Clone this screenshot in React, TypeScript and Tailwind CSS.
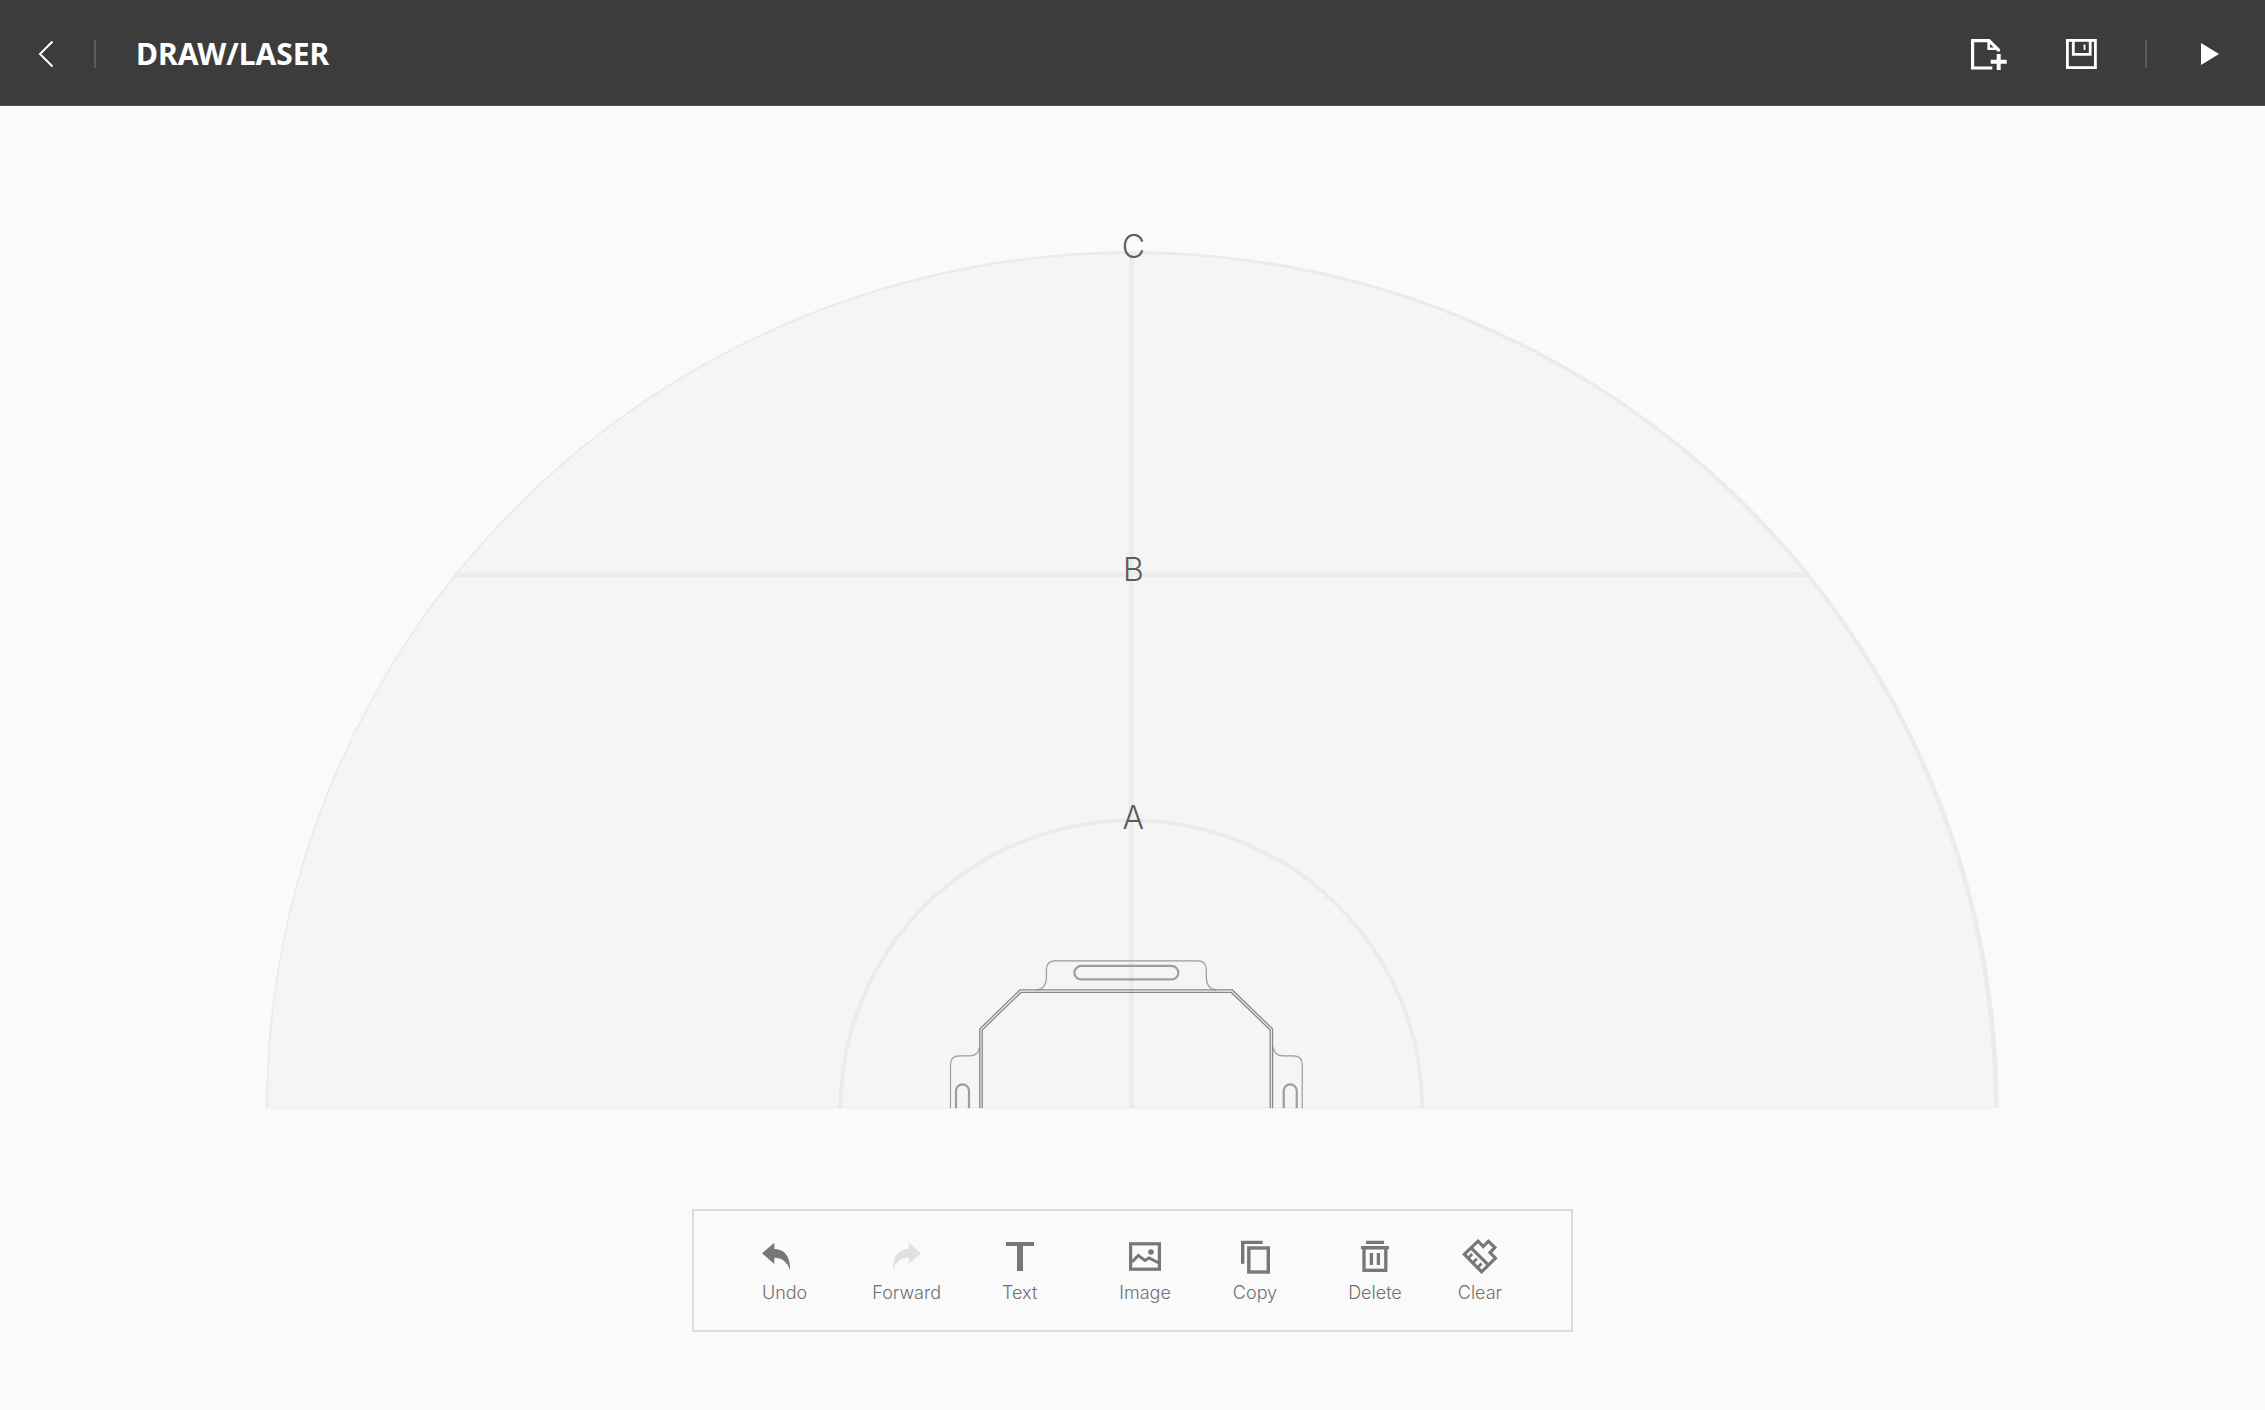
import React from "react";

type Tool = {
  label: string;
  spacing: string;
  align?: string;
  disabled?: boolean;
  icon: React.ReactNode;
};

function Icon({ width, height = 36, children }: { width: number; height?: number; children: React.ReactNode }) {
  return (
    <svg width={width} height={height} viewBox={`0 0 ${width} ${height}`} fill="none" stroke="currentColor" aria-hidden="true">
      {children}
    </svg>
  );
}

const TOOLS: Tool[] = [
  {
    label: "Undo",
    spacing: "",
    align: "items-start",
    icon: (
      <Icon width={28}>
        <path d="M0 15.3 12.3 4.7V11C22 11 28.5 18 28 32 25.5 24 20 19.7 12.3 19.7V26Z" fill="currentColor" stroke="none" />
      </Icon>
    ),
  },
  {
    label: "Forward",
    spacing: "ml-[65px]",
    disabled: true,
    icon: (
      <Icon width={28}>
        <path d="M28 15.3 15.7 4.7V11C6 11-.5 18 0 32 2.5 24 8 19.7 15.7 19.7V26Z" fill="currentColor" stroke="none" />
      </Icon>
    ),
  },
  {
    label: "Text",
    spacing: "ml-[61px]",
    icon: (
      <Icon width={28}>
        <path d="M0 6H28" strokeWidth="4" />
        <path d="M14 6V33" strokeWidth="6" />
      </Icon>
    ),
  },
  {
    label: "Image",
    spacing: "ml-[82px]",
    icon: (
      <Icon width={32}>
        <rect x="1.6" y="5.8" width="28.8" height="25.4" strokeWidth="3.2" />
        <path d="M3 24 9.3 17.5 16 22.5 20 20 30 25" strokeWidth="3" />
        <circle cx="22" cy="14" r="2.8" fill="currentColor" stroke="none" />
      </Icon>
    ),
  },
  {
    label: "Copy",
    spacing: "ml-[62px]",
    icon: (
      <Icon width={29}>
        <path d="M1.7 25.7V4.4H21.7" strokeWidth="3.4" />
        <rect x="7.8" y="10" width="19.5" height="24" strokeWidth="3.4" />
      </Icon>
    ),
  },
  {
    label: "Delete",
    spacing: "ml-[71px]",
    icon: (
      <Icon width={28}>
        <path d="M5 4.4H23M0 9.7H28M10.4 15V27M17.4 15V27" strokeWidth="3.3" />
        <rect x="3" y="9.7" width="21.8" height="22.6" strokeWidth="3.3" />
      </Icon>
    ),
  },
  {
    label: "Clear",
    spacing: "ml-14",
    icon: (
      <Icon width={36}>
        <path d="M16 3.2 21.3 8.5 26.4 3.2 32.8 9.6 28 14.6 33.4 20.2 19.6 33.8 2.3 16.3Z" strokeWidth="3.2" />
        <path d="M9 9.8 26.5 27.2" strokeWidth="3.2" />
        <path d="M6 20.3 10.2 16.1M10.7 25 14.9 20.8M15.4 29.7 19.6 25.5" strokeWidth="2.8" />
      </Icon>
    ),
  },
];

function WorkArea() {
  return (
    <svg
      viewBox="0 0 1734 858"
      className="w-[76.5%] overflow-visible"
      fill="none"
      role="img"
      aria-label="Working range with zones A, B and C"
    >
      <path d="M0 858A867 858 0 0 1 1734 858Z" fill="#ebebeb" />
      <path d="M2 857A863.5 854 0 0 1 1729 857Z" fill="#f5f5f5" />
      <path d="M189 324H1544M866 1V858" stroke="#ebebeb" strokeWidth="4.6" />
      <path d="M575 858A291 288 0 0 1 1157 858" stroke="#ebebeb" strokeWidth="4" />

      <g stroke="#9c9c9c" strokeWidth="1.2">
        <path d="M771 740Q781 738 781 727V719Q781 710.5 790 710.5H932Q941 710.5 941 719V727Q941 738 951 740" />
        <path d="M685 858V814Q685 805.5 694 805.5H704Q713 805.5 714 797" />
        <path d="M1037 858V814Q1037 805.5 1028 805.5H1018Q1009 805.5 1008 797" />
      </g>
      <g stroke="#868686" strokeWidth="1.3">
        <path d="M714.3 858V778.5L754.5 739.5H967L1007.3 778.5V858" />
        <path d="M716.7 858V779.5L755.5 742H966L1005 779.5V858" />
      </g>
      <g stroke="#9e9e9e" strokeWidth="2.2">
        <rect x="809" y="715.5" width="104" height="13.5" rx="6.7" />
        <path d="M690.5 858V840.5a6.5 6.5 0 0 1 13 0V858" />
        <path d="M1018.5 858V840.5a6.5 6.5 0 0 1 13 0V858" />
      </g>

      <g fill="#5c5c5c" textAnchor="middle" className="font-[Inter,sans-serif] text-[32px] font-light">
        <text x="868" y="7">C</text>
        <text x="868" y="330">B</text>
        <text x="868" y="578">A</text>
      </g>
    </svg>
  );
}

export default function App() {
  return (
    <div className="flex min-h-screen flex-col bg-[#fafafa]">
      <header className="flex h-[106px] items-center border-b border-[#505050] bg-[#3c3c3c] pt-[3px] pr-11 pl-8 text-white">
        <button type="button" aria-label="Back" className="flex h-12 w-7 items-center justify-center">
          <Icon width={16} height={28}>
            <path d="M14.5 1.5 2 14 14.5 26.5" strokeWidth="2" />
          </Icon>
        </button>
        <span className="ml-[34px] h-7 w-0.5 bg-[#5c5c5c]" />
        <h1 className="ml-10 font-['Noto_Sans',sans-serif] text-[30px] leading-10 font-bold">DRAW/LASER</h1>

        <div className="ml-auto flex items-center">
          <button type="button" aria-label="New file">
            <Icon width={36} height={31}>
              <path d="M21.3 29H1.6V1.6H18L27.5 11V12.5" strokeWidth="3.2" />
              <path d="M17.7 2V9.8H27" strokeWidth="2.6" />
              <path d="M19.7 22.7H35.7M27.7 15V31" strokeWidth="4" />
            </Icon>
          </button>
          <button type="button" aria-label="Save" className="ml-[59px]">
            <Icon width={31} height={30}>
              <rect x="1.4" y="1.4" width="28" height="27.2" strokeWidth="2.8" />
              <path d="M7.3 1.5V15.3H24.2V1.5" strokeWidth="2.8" />
              <path d="M18.5 5.5V11" strokeWidth="1.8" />
            </Icon>
          </button>
          <span className="ml-12 h-7 w-0.5 bg-[#5c5c5c]" />
          <button type="button" aria-label="Play" className="ml-[54px]">
            <Icon width={20} height={24}>
              <path d="M0 1V23L18 12Z" fill="currentColor" stroke="none" />
            </Icon>
          </button>
        </div>
      </header>

      <main className="flex flex-1 flex-col items-center pt-[145px]">
        <WorkArea />
        <div
          role="toolbar"
          aria-label="Edit"
          className="mt-[101px] flex justify-center border-2 border-[#dcdcdc] pt-[27px] pr-[69px] pb-[23px] pl-[68px] font-[Inter,sans-serif] text-lg font-light text-[#707070]"
        >
          {TOOLS.map((tool) => (
            <button
              key={tool.label}
              type="button"
              disabled={tool.disabled}
              className={`flex flex-col gap-[5px] ${tool.align ?? "items-center"} ${tool.spacing}`}
            >
              <span className={tool.disabled ? "text-[#e0e0e0]" : "text-[#777777]"}>{tool.icon}</span>
              <span className="leading-7">{tool.label}</span>
            </button>
          ))}
        </div>
      </main>
    </div>
  );
}
